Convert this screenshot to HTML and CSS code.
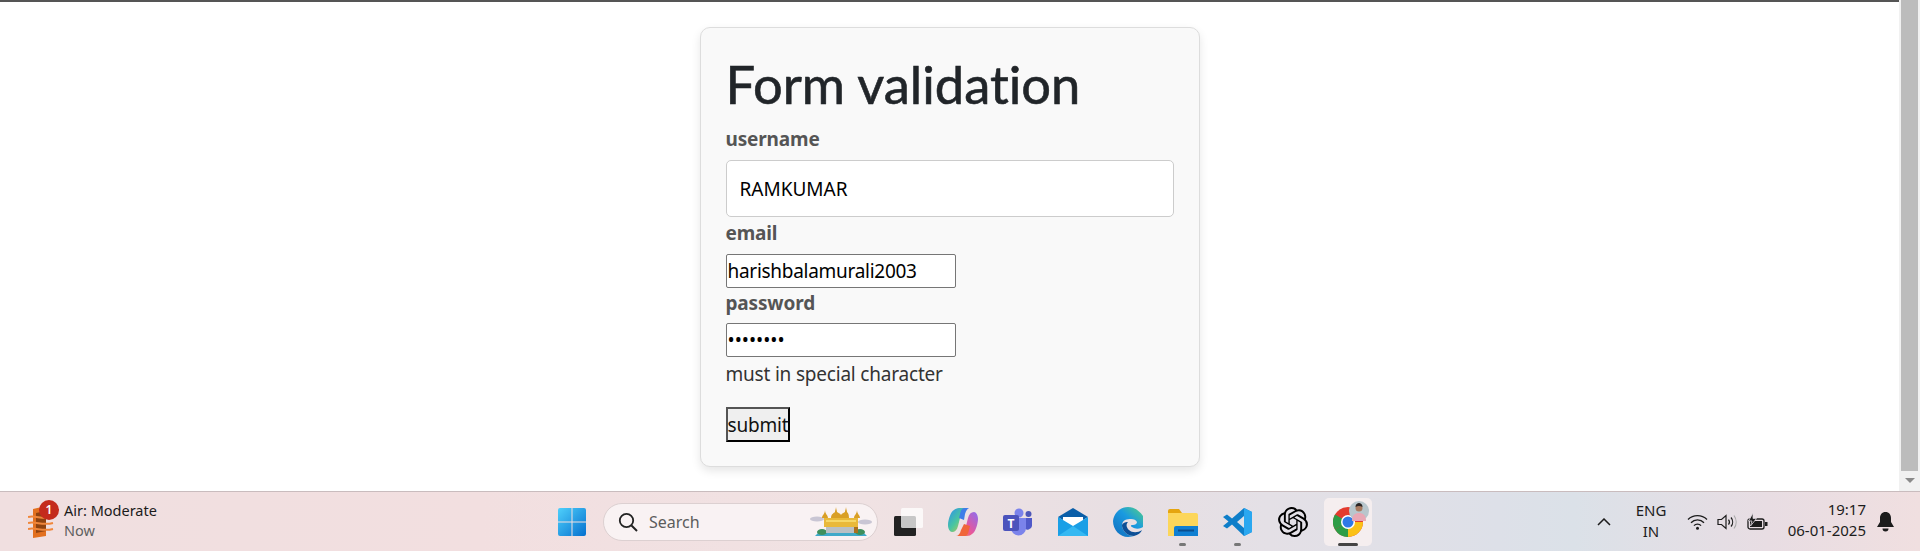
FILE: index.html
```html
<!DOCTYPE html>
<html lang="en">
<head>
    <meta charset="UTF-8">
    <meta name="viewport" content="width=device-width, initial-scale=1.0">
    <title>Form validation</title>
    <link rel="stylesheet" href="styles.css">
</head>
<body>
<div class="window">
    <!-- page -->
    <main class="page">
        <form class="card">
            <h1>Form validation</h1>
            <label class="field-label">username</label>
            <input class="input-wide" type="text" value="RAMKUMAR">
            <label class="field-label">email</label>
            <input class="input-plain" type="text" value="harishbalamurali2003">
            <label class="field-label">password</label>
            <input class="input-plain input-pass" type="password" value="12345678">
            <p class="hint">must in special character</p>
            <button class="submit" type="button">submit</button>
        </form>
    </main>
    <!-- scrollbar -->
    <div class="scrollbar">
        <div class="thumb"></div>
        <div class="arrow"></div>
    </div>
</div>

<!-- taskbar -->
<footer class="taskbar">
    <div class="widget">
        <div class="widget-icon">
            <svg width="27" height="32" viewBox="0 0 27 32">
                <path d="M5 3l13-3v30l-13 2z" fill="#e2701f"/>
                <path d="M8 7l10-2v20l-10 2z" fill="#8f4310"/>
                <path d="M0 11c8-2 14 3 25 0M0 17c8-2 14 3 25 0M0 23c8-2 14 3 25 0" fill="none" stroke="#f0863a" stroke-width="2"/>
            </svg>
            <span class="badge">1</span>
        </div>
        <div class="widget-text">
            <span class="widget-title">Air: Moderate</span>
            <span class="widget-sub">Now</span>
        </div>
    </div>

    <div class="apps">
        <div class="app">
            <svg width="30" height="30" viewBox="0 0 30 30">
                <defs>
                    <linearGradient id="win" x1="0" y1="0" x2="1" y2="1">
                        <stop offset="0" stop-color="#4fd0fb"/>
                        <stop offset="1" stop-color="#0570cf"/>
                    </linearGradient>
                </defs>
                <path d="M1 3a2 2 0 0 1 2-2h11.500v13.500H1zM15.500 1H27a2 2 0 0 1 2 2v11.500H15.500zM1 15.500h13.500V29H3a2 2 0 0 1-2-2zM15.500 15.500H29V27a2 2 0 0 1-2 2H15.500z" fill="url(#win)"/>
            </svg>
        </div>
        <div class="search">
            <svg width="20" height="20" viewBox="0 0 20 20">
                <circle cx="8.500" cy="8.500" r="6.700" fill="none" stroke="#222" stroke-width="1.800"/>
                <path d="M13.500 13.500l5.500 5.500" stroke="#222" stroke-width="2"/>
            </svg>
            <span class="search-text">Search</span>
            <svg class="temple" width="62" height="32" viewBox="0 0 62 32">
                <ellipse cx="7" cy="13" rx="7" ry="2.500" fill="#c9c6d4"/>
                <ellipse cx="55" cy="16" rx="7" ry="2.500" fill="#c9c6d4"/>
                <path d="M8 27h46l3 3H5z" fill="#3fa9c9"/>
                <ellipse cx="12" cy="26" rx="5" ry="3" fill="#3e8f5c"/>
                <ellipse cx="50" cy="26" rx="5" ry="3" fill="#3e8f5c"/>
                <rect x="14" y="12" width="34" height="9" fill="#e9b93a"/>
                <rect x="16" y="21" width="28" height="6" fill="#b9c0c4"/>
                <rect x="44" y="21" width="4" height="6" fill="#a9701f"/>
                <path d="M21 12c0-4 3-5 4-6 0-2 1-3 1-5 0 2 1 3 1 5 1 1 3 1 4 3 1-2 3-2 4-3 0-2 1-3 1-5 0 2 1 3 1 5 1 1 2 2 2 6z" fill="#d99f26"/>
                <path d="M12 12c0-3 3-4 3-8 0 4 3 5 3 8zM44 12c0-3 3-4 3-8 0 4 3 5 3 8z" fill="#d99f26"/>
                <rect x="16" y="14" width="30" height="2" fill="#f6d867"/>
            </svg>
        </div>
        <div class="app app-first">
            <svg width="30" height="30" viewBox="0 0 30 30">
                <rect x="1" y="9" width="22" height="20" rx="1.500" fill="#222"/>
                <rect x="8" y="1" width="22" height="20" rx="1.500" fill="#fff" fill-opacity=".75"/>
            </svg>
        </div>
        <div class="app">
            <svg width="30" height="30" viewBox="0 0 30 30">
                <defs>
                    <linearGradient id="cop1" x1="0" y1="0" x2="1" y2="1">
                        <stop offset="0" stop-color="#2b8ff0"/>
                        <stop offset=".5" stop-color="#49c6a0"/>
                        <stop offset="1" stop-color="#f3c52e"/>
                    </linearGradient>
                    <linearGradient id="cop2" x1="1" y1="0" x2="0" y2="1">
                        <stop offset="0" stop-color="#8b6ef0"/>
                        <stop offset=".6" stop-color="#e8569b"/>
                        <stop offset="1" stop-color="#f58a3c"/>
                    </linearGradient>
                </defs>
                <path d="M11 1h8c-3 0-5 2-6 6l-3 12c-1 4-3 6-6 6-2 0-4-3-4-7 0-5 3-14 6-15 1-1 3-2 5-2z" fill="url(#cop1)"/>
                <path d="M19 29h-8c3 0 5-2 6-6l3-12c1-4 3-6 6-6 2 0 4 3 4 7 0 5-3 14-6 15-1 1-3 2-5 2z" fill="url(#cop2)"/>
                <path d="M17 7c1-4 3-6 5-6h-5c-3 0-4 2-5 6l-1 4 5 2z" fill="#3f7de8"/>
                <path d="M13 23c-1 4-3 6-5 6h8c3 0 4-2 5-6l1-4-6-2z" fill="#f0663a"/>
            </svg>
        </div>
        <div class="app">
            <svg width="30" height="28" viewBox="0 0 30 28">
                <circle cx="16" cy="5" r="4.500" fill="#7b83eb"/>
                <circle cx="25.500" cy="6" r="3" fill="#4e57b8"/>
                <path d="M21 10h8v8a4.500 4.500 0 0 1-8 2z" fill="#5059c9"/>
                <path d="M8 10h15v10a7.500 7.500 0 0 1-15 0z" fill="#7b83eb"/>
                <rect x="0" y="7" width="16" height="16" rx="2" fill="#4b53bc"/>
                <text class="teams-t" x="8" y="19.500" text-anchor="middle">T</text>
            </svg>
        </div>
        <div class="app">
            <svg width="30" height="28" viewBox="0 0 30 28">
                <path d="M0 9L15 0l15 9-15 9z" fill="#0a5ea8"/>
                <path d="M5 9h20v8l-10 5-10-5z" fill="#fff"/>
                <path d="M0 9l15 9 15-9v19H0z" fill="#1a9fe6"/>
                <path d="M0 28l15-10 15 10z" fill="#35b8f2"/>
            </svg>
        </div>
        <div class="app">
            <svg width="30" height="30" viewBox="0 0 30 30">
                <defs>
                    <linearGradient id="edge" x1="0" y1="1" x2="1" y2="0">
                        <stop offset="0" stop-color="#0f6cbd"/>
                        <stop offset=".55" stop-color="#1a9ae0"/>
                        <stop offset="1" stop-color="#5ad67a"/>
                    </linearGradient>
                </defs>
                <path d="M15 0C7 0 1 6 0 14c0 9 7 16 15 16 3 0 5-1 6-1-6 0-11-4-12-10 0-3 1-5 3-6 2-1 4-1 6-1 3 0 5 1 6 3 0 2-2 3-4 3h-1c-1.500 0-1.500 1 0 2 3 2 6 2 9 1 3-1 5-4 5-7C29 6 23 0 15 0z" fill="url(#edge)"/>
                <path d="M9 19c1 6 6 10 12 10 4-1 7-3 8-6-4 3-10 3-13 0-3-3-3-6-1-8-3 0-6 1-6 4z" fill="#0c4f96"/>
            </svg>
        </div>
        <div class="app app-open">
            <svg width="30" height="28" viewBox="0 0 30 28">
                <path d="M0 3a2 2 0 0 1 2-2h9l3 4h-14z" fill="#e5a50f"/>
                <path d="M0 5h28a2 2 0 0 1 2 2v19a2 2 0 0 1-2 2H0z" fill="#fcd65a"/>
                <path d="M6 20a2 2 0 0 1 2-2h22v10H6z" fill="#0f7fd2"/>
                <rect x="10" y="21.500" width="16" height="2" fill="#0a4f8f"/>
            </svg>
            <span class="dot"></span>
        </div>
        <div class="app app-open">
            <svg width="30" height="30" viewBox="0 0 30 30">
                <path d="M21 1l8 4v20l-8 4-12-11.500-5 4-4-2.500 5.500-4.500L0 10l4-2.500 5 4z" fill="#0e7ec9"/>
                <path d="M21 1l8 4v20l-8 4z" fill="#2aa7f0"/>
                <path d="M21 9l-7 6 7 6z" fill="#dfe2e9"/>
            </svg>
            <span class="dot"></span>
        </div>
        <div class="app">
            <svg width="30" height="30" viewBox="0 0 24 24">
                <path fill="#000" d="M22.2819 9.8211a5.9847 5.9847 0 0 0-.5157-4.9108 6.0462 6.0462 0 0 0-6.5098-2.9A6.0651 6.0651 0 0 0 4.9807 4.1818a5.9847 5.9847 0 0 0-3.9977 2.9 6.0462 6.0462 0 0 0 .7427 7.0966 5.98 5.98 0 0 0 .511 4.9107 6.051 6.051 0 0 0 6.5146 2.9001A5.9847 5.9847 0 0 0 13.2599 24a6.0557 6.0557 0 0 0 5.7718-4.2058 5.9894 5.9894 0 0 0 3.9977-2.9001 6.0557 6.0557 0 0 0-.7475-7.0729zm-9.022 12.6081a4.4755 4.4755 0 0 1-2.8764-1.0408l.1419-.0804 4.7783-2.7582a.7948.7948 0 0 0 .3927-.6813v-6.7369l2.02 1.1686a.071.071 0 0 1 .038.052v5.5826a4.504 4.504 0 0 1-4.4945 4.4944zm-9.6607-4.1254a4.4708 4.4708 0 0 1-.5346-3.0137l.142.0852 4.783 2.7582a.7712.7712 0 0 0 .7806 0l5.8428-3.3685v2.3324a.0804.0804 0 0 1-.0332.0615L9.74 19.9502a4.4992 4.4992 0 0 1-6.1408-1.6464zM2.3408 7.8956a4.485 4.485 0 0 1 2.3655-1.9728V11.6a.7664.7664 0 0 0 .3879.6765l5.8144 3.3543-2.0201 1.1685a.0757.0757 0 0 1-.071 0l-4.8303-2.7865A4.504 4.504 0 0 1 2.3408 7.872zm16.5963 3.8558L13.1038 8.364 15.1192 7.2a.0757.0757 0 0 1 .071 0l4.8303 2.7913a4.4944 4.4944 0 0 1-.6765 8.1042v-5.6772a.79.79 0 0 0-.407-.667zm2.0107-3.0231l-.142-.0852-4.7735-2.7818a.7759.7759 0 0 0-.7854 0L9.409 9.2297V6.8974a.0662.0662 0 0 1 .0284-.0615l4.8303-2.7866a4.4992 4.4992 0 0 1 6.6802 4.66zM8.3065 12.863l-2.02-1.1638a.0804.0804 0 0 1-.038-.0567V6.0742a4.4992 4.4992 0 0 1 7.3757-3.4537l-.142.0805L8.704 5.459a.7948.7948 0 0 0-.3927.6813zm1.0976-2.3654l2.602-1.4998 2.6069 1.4998v2.9994l-2.5974 1.4997-2.6067-1.4997Z"/>
            </svg>
        </div>
        <div class="app app-active">
            <svg width="30" height="30" viewBox="0 0 30 30">
                <circle cx="15" cy="15" r="15" fill="#e33b2e"/>
                <path d="M15 15L2 22.500A15 15 0 0 0 15 30z" fill="#2d9d46"/>
                <path d="M2 22.500A15 15 0 0 1 2 7.500L15 15z" fill="#2d9d46"/>
                <path d="M15 15h15A15 15 0 0 1 15 30z" fill="#fbc116"/>
                <circle cx="15" cy="15" r="7" fill="#fff"/>
                <circle cx="15" cy="15" r="5.500" fill="#2e79e6"/>
            </svg>
            <svg class="avatar" width="20" height="20" viewBox="0 0 20 20">
                <circle cx="10" cy="10" r="10" fill="#b8c6cc"/>
                <path d="M3 20c0-6 3-8 7-8s7 2 7 8z" fill="#e8a7b4"/>
                <circle cx="10" cy="7" r="3.500" fill="#a97a5f"/>
                <path d="M6.500 6c0-3 2-4 3.500-4s3.500 1 3.500 4c-2-1.500-5-1.500-7 0z" fill="#2a2422"/>
            </svg>
            <span class="bar"></span>
        </div>
    </div>

    <div class="tray">
        <svg class="chevron" width="14" height="8" viewBox="0 0 14 8">
            <path d="M1 7l6-6 6 6" fill="none" stroke="#1c1c1c" stroke-width="1.500"/>
        </svg>
        <div class="lang"><span>ENG</span><span>IN</span></div>
        <div class="status">
            <svg width="21" height="16" viewBox="0 0 21 16">
                <path d="M1 5.500a13.500 13.500 0 0 1 19 0M4 8.700a9 9 0 0 1 13 0M7 11.700a4.500 4.500 0 0 1 7 0" fill="none" stroke="#1c1c1c" stroke-width="1.300"/>
                <circle cx="10.500" cy="14.300" r="1.500" fill="#1c1c1c"/>
            </svg>
            <svg width="21" height="16" viewBox="0 0 21 16">
                <path d="M1 5.500h3.500L9 1.500v13l-4.500-4H1z" fill="none" stroke="#1c1c1c" stroke-width="1.200"/>
                <path d="M11.500 5.500a4 4 0 0 1 0 5M14 3.500a7 7 0 0 1 0 9" fill="none" stroke="#1c1c1c" stroke-width="1.200"/>
                <path d="M17 1.500a11 11 0 0 1 0 13" fill="none" stroke="#aaa" stroke-width="1.200"/>
            </svg>
            <svg width="21" height="18" viewBox="0 0 21 18">
                <rect x="1" y="6" width="16" height="10" rx="2" fill="none" stroke="#1c1c1c" stroke-width="1.300"/>
                <rect x="3" y="8" width="12" height="6" fill="#1c1c1c"/>
                <rect x="18" y="9" width="2.500" height="4" fill="#1c1c1c"/>
                <path d="M6 0L1.500 8h3.500l-1.500 5 6-7.500H6z" fill="#1c1c1c" stroke="#e4dde4" stroke-width=".8"/>
            </svg>
        </div>
        <div class="clock"><span>19:17</span><span>06-01-2025</span></div>
        <svg class="bell" width="17" height="20" viewBox="0 0 17 20">
            <path d="M8.500 0c3.500 0 5.500 2.700 5.500 6v4l3 5H0l3-5V6c0-3.300 2-6 5.500-6z" fill="#1c1c1c"/>
            <path d="M5.500 16.500h6a3 3 0 0 1-6 0z" fill="#1c1c1c"/>
        </svg>
    </div>
</footer>
</body>
</html>
```

FILE: styles.css
```css
* {
  box-sizing: border-box;
}
html, body {
  height: 100%;
}
body {
  margin: 0;
  display: flex;
  flex-direction: column;
  overflow: hidden;
  font-family: "Noto Sans", "Open Sans", sans-serif;
  background-color: #fff;
}
.window {
  height: 491px;
  display: flex;
  overflow: hidden;
}

/* page */
.page {
  flex: 1;
  border-top: 2px solid #555;
  padding-top: 25px;
  overflow: hidden;
}
.card {
  width: 500px;
  margin: 0 auto;
  padding: 25px 25px 24px;
  background-color: #f9f9f9;
  border: 1px solid #ddd;
  border-radius: 10px;
  box-shadow: 0 4px 10px rgba(0, 0, 0, 0.1);
}
.card h1 {
  margin: 0 0 11px;
  font-family: "Lato", "Noto Sans", sans-serif;
  font-size: 52.5px;
  font-weight: 400;
  font-variant-ligatures: none;
  -webkit-text-stroke: 0.6px #212529;
  line-height: 62px;
  color: #212529;
}
.field-label {
  display: block;
  font-size: 19px;
  font-weight: 700;
  line-height: 26px;
  letter-spacing: -0.15px;
  color: #555;
}
.input-wide {
  display: block;
  width: 448px;
  height: 57px;
  margin: 8px 0 3px;
  padding: 0 13px;
  font: 19px "Noto Sans", sans-serif;
  color: #000;
  background-color: #fff;
  border: 1px solid #ccc;
  border-radius: 5px;
}
.input-plain {
  display: block;
  width: 230px;
  height: 34px;
  margin: 8px 0 2px;
  padding: 0 1px;
  font: 19px "Noto Sans", sans-serif;
  letter-spacing: -0.28px;
  color: #000;
  background-color: #fff;
  border: 1px solid #767676;
  border-radius: 2px;
}
.input-pass {
  margin-top: 7px;
  letter-spacing: 0;
}
.hint {
  margin: 0;
  font-size: 19px;
  line-height: 30px;
  letter-spacing: -0.2px;
  color: #333;
}
.submit {
  display: block;
  width: 64px;
  height: 35px;
  margin: 18px 0 0;
  padding: 0;
  font: 19px "Noto Sans", sans-serif;
  letter-spacing: -0.2px;
  color: #111;
  background-color: #efefef;
  border: 2px solid #000;
  border-top-color: #555;
  border-left-color: #555;
}

/* scrollbar */
.scrollbar {
  width: 21px;
  padding: 0 2px;
  display: flex;
  flex-direction: column;
  align-items: center;
  background-color: #f1f1f1;
}
.thumb {
  width: 17px;
  height: 471px;
  background-color: #bcbcbc;
}
.arrow {
  width: 0;
  height: 0;
  margin-top: 7px;
  border-left: 5px solid transparent;
  border-right: 5px solid transparent;
  border-top: 5px solid #8a8a8a;
}

/* taskbar */
.taskbar {
  height: 60px;
  display: flex;
  align-items: center;
  border-top: 1px solid #c9bcbe;
  background: linear-gradient(90deg, #f0dfe0 0%, #f2dfe0 25%, #f0e2e3 45%, #e8dfe3 58%, #e4e0e6 66%, #dde0e8 78%, #dbe1e8 82%, #e8dde3 92%, #f0dfe0 100%);
}
.widget {
  width: 544px;
  padding-left: 28px;
  display: flex;
  align-items: center;
  gap: 11px;
}
.widget-icon {
  position: relative;
  width: 25px;
  height: 32px;
}
.badge {
  position: absolute;
  top: -6px;
  right: -6px;
  width: 20px;
  height: 20px;
  border-radius: 50%;
  background-color: #c42b1c;
  color: #fff;
  font-size: 12px;
  font-weight: 600;
  line-height: 20px;
  text-align: center;
}
.widget-text {
  display: flex;
  flex-direction: column;
  font-size: 14.5px;
  line-height: 20px;
  margin-top: -3px;
}
.widget-title {
  color: #1b1b1b;
}
.widget-sub {
  color: #5f5f5f;
}
.apps {
  display: flex;
  align-items: center;
}
.app {
  position: relative;
  width: 55px;
  height: 48px;
  display: flex;
  align-items: center;
  justify-content: center;
}
.app-first {
  margin-left: 2px;
}
.app-active {
  background-color: #f5eeef;
  border-radius: 5px;
  width: 48px;
  margin-left: 4px;
}
.dot {
  position: absolute;
  bottom: 0;
  left: 24px;
  width: 7px;
  height: 3px;
  border-radius: 2px;
  background-color: #777;
}
.bar {
  position: absolute;
  bottom: 0;
  left: 14px;
  width: 20px;
  height: 3px;
  border-radius: 2px;
  background-color: #444;
}
.avatar {
  position: absolute;
  top: 3px;
  right: 3px;
}
.teams-t {
  font-size: 12px;
  font-weight: 700;
  fill: #fff;
}
.search {
  width: 275px;
  height: 38px;
  margin-left: 4px;
  padding: 0 3px 0 14px;
  display: flex;
  align-items: center;
  border: 1px solid #dcd0d1;
  border-radius: 19px;
  background-color: #f9f2f3;
}
.search-text {
  flex: 1;
  margin-left: 11px;
  font-size: 16px;
  color: #5c5c5c;
}
.temple {
  margin-right: 2px;
}
.tray {
  margin-left: auto;
  display: flex;
  align-items: center;
}
.chevron {
  margin-right: 20px;
}
.lang {
  width: 40px;
  display: flex;
  flex-direction: column;
  align-items: center;
  gap: 2px;
  margin-top: -1px;
  font-size: 15px;
  line-height: 19px;
  color: #1c1c1c;
}
.status {
  margin-left: 16px;
  display: flex;
  align-items: center;
  gap: 9px;
}
.clock {
  width: 88px;
  margin-left: 10px;
  margin-top: -4px;
  display: flex;
  flex-direction: column;
  align-items: flex-end;
  gap: 2px;
  font-size: 15px;
  line-height: 19px;
  color: #1c1c1c;
}
.bell {
  margin: 0 26px 0 11px;
}
```
